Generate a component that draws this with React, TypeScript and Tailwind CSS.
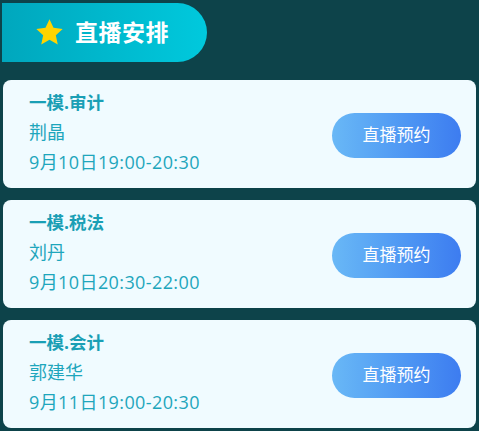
import React from 'react'

const LIVES = [
  { title: '一模.审计', teacher: '荆晶', time: '9月10日19:00-20:30' },
  { title: '一模.税法', teacher: '刘丹', time: '9月10日20:30-22:00' },
  { title: '一模.会计', teacher: '郭建华', time: '9月11日19:00-20:30' },
]

const Star: React.FC = () => (
  <svg width="31" height="31" viewBox="0 0 24 24">
    <path
      d="M12 1.8l3.1 6.6 7.1.8-5.3 4.9 1.5 7.1L12 17.6l-6.4 3.6 1.5-7.1L1.8 9.2l7.1-.8z"
      fill="#ffd400"
    />
  </svg>
)

export default function App() {
  return (
    <div
      className="w-[479px] h-[431px] bg-[#0d434a] overflow-hidden pt-[3px]"
      style={{ fontFamily: '"Open Sans", "Noto Sans CJK SC", sans-serif' }}
    >
      <div className="ml-[2px] w-[205px] h-[59px] rounded-r-full bg-gradient-to-r from-[#00a7bd] to-[#00c9dd] flex items-center pl-[32px] gap-[10px]">
        <Star />
        <span className="text-white text-[23px] font-bold tracking-[0.5px]">直播安排</span>
      </div>
      <div className="mt-[18px] px-[3px] flex flex-col gap-[12px]">
        {LIVES.map((l) => (
          <div
            key={l.title}
            className="h-[108px] rounded-[8px] bg-[#f0fbff] flex items-center justify-between pl-[26px] pr-[15px]"
          >
            <div className="flex flex-col text-[#1ea6bc] text-[18px] leading-[30px] -mt-[4px]">
              <span className="font-bold text-[#1a9fb5] text-[17.5px]">{l.title}</span>
              <span>{l.teacher}</span>
              <span className="tracking-[0.4px]">{l.time}</span>
            </div>
            <button className="w-[129px] h-[45px] rounded-full bg-gradient-to-r from-[#69b8f6] to-[#3d7cf0] text-white text-[17px] mt-[2px]">
              直播预约
            </button>
          </div>
        ))}
      </div>
    </div>
  )
}
